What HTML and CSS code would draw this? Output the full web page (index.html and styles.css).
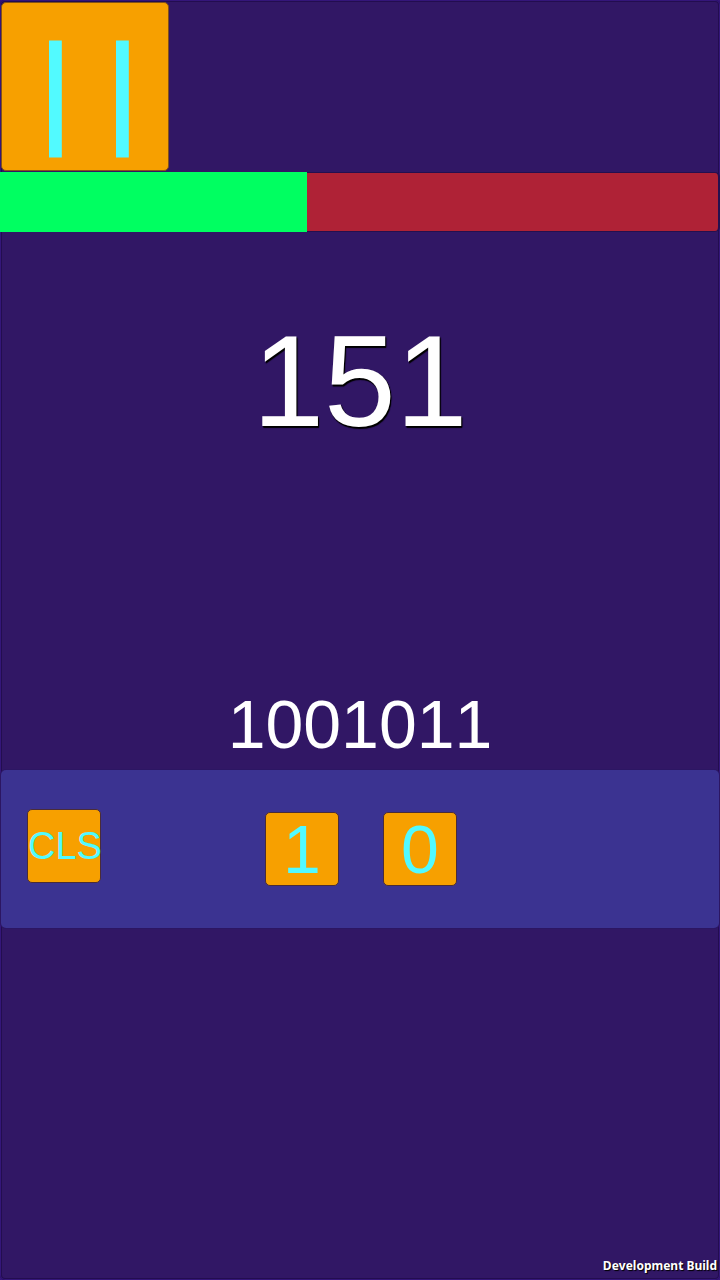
FILE: index.html
```html
<!DOCTYPE html>
<html lang="en">
<head>
  <meta charset="utf-8">
  <meta name="viewport" content="width=device-width, initial-scale=1">
  <title>Binary</title>
  <link rel="stylesheet" href="styles.css">
</head>
<body>
  <main class="game">
    <button class="tile pause" type="button" aria-label="Pause">
      <svg class="pause-icon" viewBox="0 0 166 166" aria-hidden="true">
        <path d="M47 36.6h12.8v117H47zM114 36.6h12.8v117H114z" fill="#52faff"/>
      </svg>
    </button>
    <div class="timer" role="progressbar" aria-label="Time left" aria-valuemin="0" aria-valuemax="720" aria-valuenow="308">
      <div class="timer-fill" style="width: 42.8%"></div>
    </div>
    <div class="target">151</div>
    <output class="answer">1001011</output>
    <div class="keypad">
      <button class="tile key clear" type="button">CLS</button>
      <div class="digits">
        <button class="tile key digit" type="button">1</button>
        <button class="tile key digit" type="button">0</button>
      </div>
    </div>
    <footer class="build">Development Build</footer>
  </main>
</body>
</html>
```
FILE: styles.css
```css
* {
  box-sizing: border-box;
}

body {
  margin: 0;
  background: #34167a;
  color: #fff;
  font-family: "Liberation Sans", Arial, sans-serif;
  font-kerning: none;
}

.game {
  display: flex;
  flex-direction: column;
  min-height: 100vh;
  padding-top: 2px;
  background: #311765;
  border-radius: 5px;
  box-shadow: inset 0 0 0 1px #34167a, inset 0 0 0 2px #230d50;
}

.tile {
  padding: 0;
  border: 1px solid #4a2c38;
  border-radius: 5px;
  background: #f7a000;
  color: #52faff;
  font-family: inherit;
  font-kerning: inherit;
  cursor: pointer;
}

.pause {
  align-self: flex-start;
  width: 168px;
  height: 169px;
  margin-left: 1px;
  border-color: #835119;
}

.pause-icon {
  display: block;
  width: 100%;
}

.timer {
  height: 60px;
  margin-top: 1px;
  border: 1px solid #25104f;
  border-width: 1px 2px 1px 0;
  border-radius: 5px;
  background: #af2236;
}

.timer-fill {
  height: 60px;
  margin-top: -1px;
  background: #00ff61;
}

.target {
  margin-top: 74px;
  font-size: 129px;
  line-height: 150px;
  text-align: center;
  text-shadow: 1px 1px 1px #000, 1px 2px 1px #000;
}

.answer {
  display: block;
  margin-top: 230px;
  font-size: 68px;
  line-height: 76px;
  text-align: center;
}

.keypad {
  display: grid;
  grid-template-columns: 1fr auto 1fr;
  margin: 8px 1px 0;
  padding: 39px 24px 39px 26px;
  border-radius: 5px;
  background: #3b3391;
  box-shadow: 0 0 0 1px #2c1663;
}

.digits {
  display: flex;
  gap: 44px;
  padding: 3px 0;
}

.key {
  width: 74px;
  height: 74px;
}

.clear {
  font-size: 38px;
  line-height: 72px;
}

.digit {
  font-size: 68px;
  line-height: 72px;
}

.build {
  margin-top: auto;
  padding: 0 3px 6px;
  font-family: "Noto Sans", sans-serif;
  font-size: 12px;
  font-weight: 700;
  line-height: 16px;
  text-align: right;
  text-shadow: 1px 1px 1px #000;
}
```
